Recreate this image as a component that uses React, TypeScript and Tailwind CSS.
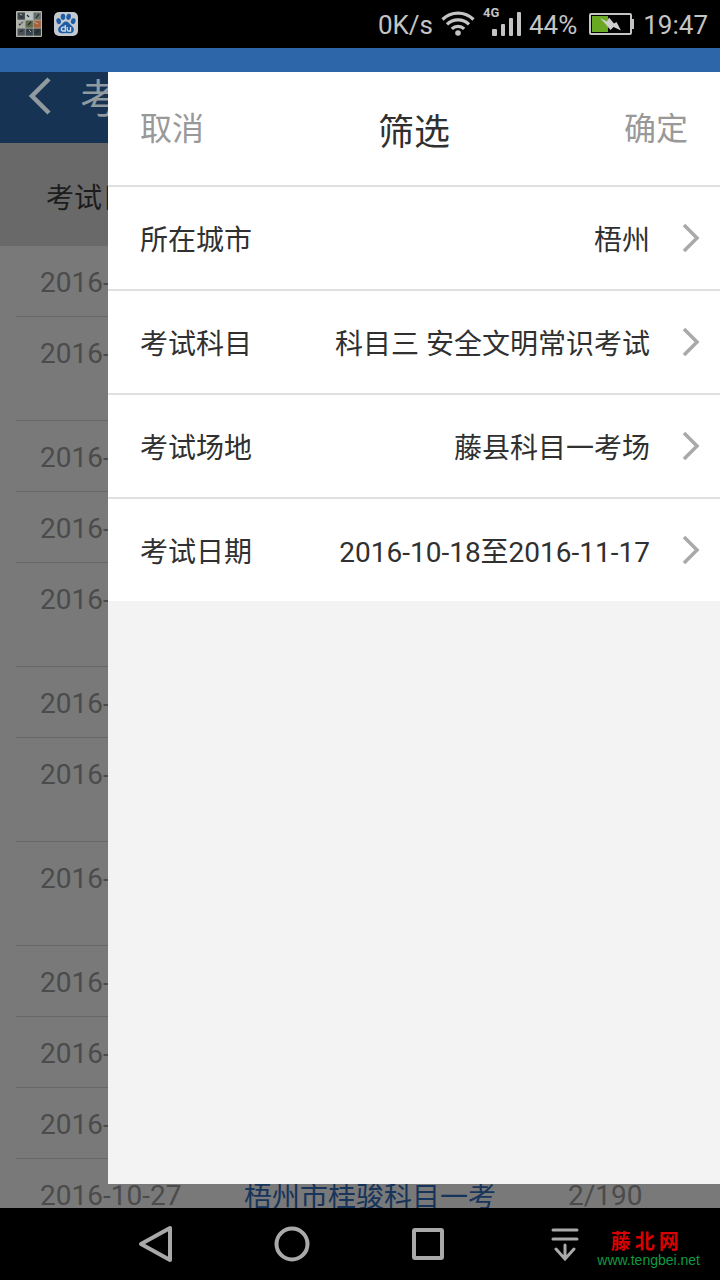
import { JSX } from "react";

type Filter = { label: string; value: string };
type Exam = { date: string; tall?: boolean; place?: string; count?: string };

const filters: Filter[] = [
  { label: "所在城市", value: "梧州" },
  { label: "考试科目", value: "科目三 安全文明常识考试" },
  { label: "考试场地", value: "藤县科目一考场" },
  { label: "考试日期", value: "2016-10-18至2016-11-17" },
];

const exams: Exam[] = [
  { date: "2016-" },
  { date: "2016-", tall: true },
  { date: "2016-" },
  { date: "2016-" },
  { date: "2016-", tall: true },
  { date: "2016-" },
  { date: "2016-", tall: true },
  { date: "2016-", tall: true },
  { date: "2016-" },
  { date: "2016-" },
  { date: "2016-" },
  { date: "2016-10-27", place: "梧州市桂骏科目一考", count: "2/190" },
];

const tiles = [
  "#3d464b", "#b9c3c4", "#65706d",
  "#a8afa8", "#5f6a4b", "#a5623c",
  "#4a5358", "#38434f", "#2f3a3a",
];

function GalleryIcon() {
  return (
    <svg width="26" height="26" viewBox="0 0 26 26" aria-hidden="true">
      <rect width="26" height="26" rx="1" fill="#b5b5ae" />
      {tiles.map((c, i) => (
        <rect key={i} x={1.5 + (i % 3) * 8} y={1.5 + Math.floor(i / 3) * 8} width="7.4" height="7.2" fill={c} />
      ))}
      <path d="M4 6h3M11 4l2 2M20 7l3-4M3 14l4-3M12 14l3-3M4 21l3-2M11 20h5M20 22l3-3" stroke="#20272a" strokeWidth="1.2" fill="none" />
      <path d="M4 3l2 1M4 12h3M18 11l4 2M13 19l2 2" stroke="#a8b0ae" fill="none" />
    </svg>
  );
}

function PawIcon() {
  return (
    <svg width="24" height="24" viewBox="0 0 24 24" aria-hidden="true">
      <rect width="24" height="24" rx="5" fill="#c3c9cf" />
      <g fill="#1f5ca6">
        <ellipse cx="4.7" cy="9.2" rx="2.3" ry="3" transform="rotate(-15 4.7 9.2)" />
        <ellipse cx="9" cy="4.8" rx="2.3" ry="3.1" />
        <ellipse cx="14.6" cy="4.8" rx="2.3" ry="3.1" transform="rotate(8 14.6 4.8)" />
        <ellipse cx="19.2" cy="9.2" rx="2.3" ry="3" transform="rotate(15 19.2 9.2)" />
        <path d="M12 9.5c2.5 0 3.3 2 4.6 3.3 1.6 1.5 3.3 2.7 3.3 4.7 0 2.7-2 3.8-4 3.8-1.4 0-2.5-.3-3.9-.3s-2.5.3-3.9.3c-2 0-4-1.100-4-3.8 0-2 1.7-3.2 3.3-4.7C8.7 11.5 9.5 9.5 12 9.5z" />
      </g>
      <path d="M11.3 13v6H9.3a1.6 1.6 0 0 1 0-3.9h2M13.2 15v2.7c0 .8.5 1.3 1.3 1.3h2v-4" stroke="#d5dbe0" strokeWidth="1.3" fill="none" />
    </svg>
  );
}

function WifiIcon() {
  return (
    <svg width="34" height="26" viewBox="0 0 34 26" fill="none" stroke="#c4c4c4" strokeWidth="3.2" aria-hidden="true">
      <path d="M1.5 8.5C10 0 24 0 32.5 8.5" />
      <path d="M6 13.3c6-6 16-6 22 0" />
      <path d="M10.8 17.8c3.4-3.2 9-3.2 12.4 0" />
      <circle cx="17" cy="22" r="2.8" fill="#c4c4c4" stroke="none" />
    </svg>
  );
}

function SignalIcon() {
  return (
    <svg width="30" height="26" viewBox="0 0 30 26" fill="#c4c4c4" aria-hidden="true">
      <rect x="1" y="18" width="5" height="7" rx="1" />
      <rect x="10" y="13" width="4" height="12" rx="1" />
      <rect x="18" y="7" width="4" height="18" rx="1" />
      <rect x="26" y="1" width="4" height="24" rx="1" />
    </svg>
  );
}

function BatteryIcon() {
  return (
    <svg width="46" height="22" viewBox="0 0 46 22" aria-hidden="true">
      <rect x="1" y="1" width="41" height="20" rx="1" fill="none" stroke="#c4c4c4" strokeWidth="2" />
      <rect x="43" y="6" width="2" height="10" fill="#c4c4c4" />
      <rect x="3" y="3" width="16" height="16" fill="#68a822" />
      <path d="M11 5L18 8.500 20 4.500 25 10.500 27.500 9 32 17.500 24.500 14 21.500 17 16.500 11z" fill="#cfcfcf" />
    </svg>
  );
}

function StatusBar() {
  return (
    <div className="h-12 shrink-0 bg-black text-[#c4c4c4] flex items-center justify-between pl-4 pr-3 text-[26px] leading-8">
      <div className="flex items-center gap-3">
        <GalleryIcon />
        <PawIcon />
      </div>
      <div className="flex items-center">
        <span className="mr-2 pt-0.5">0K/s</span>
        <WifiIcon />
        <div className="relative ml-4 mr-2">
          <span className="absolute -left-2 -top-1.5 text-[13px] leading-4 font-bold">4G</span>
          <SignalIcon />
        </div>
        <span className="mr-3 pt-0.5">44%</span>
        <BatteryIcon />
        <span className="ml-2 pt-0.5">19:47</span>
      </div>
    </div>
  );
}

function ExamList() {
  return (
    <div className="bg-[#797979]">
      <header className="h-[71px] bg-[#173354] text-[#919a9f] flex pl-7">
        <button aria-label="返回" className="w-[52px] h-12 flex items-center">
          <svg width="24" height="40" viewBox="0 0 24 40" fill="none" stroke="currentColor" strokeWidth="4.5">
            <path d="M21 3L4 20l17 17" />
          </svg>
        </button>
        <h2 className="text-[40px] leading-[56px]">考</h2>
      </header>
      <div className="h-[103px] bg-[#696969] text-[#1c1c1c] flex items-center pl-[46px] pt-2 text-[28px] leading-8">考试日</div>
      <ul className="pl-4 text-[28px] leading-[34px] text-[#4b4b4b]">
        {exams.map((exam, i) => (
          <li
            key={i}
            className={`flex items-start pt-5 pl-6 border-b border-[#666666] ${exam.tall ? "h-[104px]" : "h-[71px]"}`}
          >
            <span className="w-51">{exam.date}</span>
            {exam.place && <a href="#" className="w-81 pt-0.5 text-[#17345a]">{exam.place}</a>}
            {exam.count && <span>{exam.count}</span>}
          </li>
        ))}
      </ul>
    </div>
  );
}

function FilterDrawer() {
  return (
    <section className="absolute left-[15%] right-0 top-0 bottom-6 bg-[#f3f3f3] text-[#303030]">
      <header className="h-[115px] bg-white border-b-2 border-[#e0e0e0] flex items-center justify-between px-8">
        <button className="text-[32px] leading-10 text-[#999999]">取消</button>
        <h1 className="text-[36px] leading-10 pt-2">筛选</h1>
        <button className="text-[32px] leading-10 text-[#999999]">确定</button>
      </header>
      <div className="bg-white divide-y-2 divide-[#e0e0e0]">
        {filters.map((f) => (
          <button key={f.label} className="w-full h-[104px] last:h-[102px] flex items-center pl-8 pr-5 text-[28px] leading-8">
            <span className="pt-1.5">{f.label}</span>
            <span className="pt-1.5 ml-auto mr-8">{f.value}</span>
            <svg width="18" height="30" viewBox="0 0 18 30" fill="none" stroke="#a9a9a9" strokeWidth="3.5" aria-hidden="true">
              <path d="M2 2l13 13L2 28" />
            </svg>
          </button>
        ))}
      </div>
    </section>
  );
}

function NavBar() {
  return (
    <nav className="relative h-[72px] shrink-0 bg-black px-[12%] flex text-[#a9a9a9]">
      <button aria-label="后退" className="flex-1 flex items-center justify-center">
        <svg width="36" height="40" viewBox="0 0 36 40" fill="none" stroke="currentColor" strokeWidth="4" strokeLinejoin="round">
          <path d="M4 20L33 4v32z" />
        </svg>
      </button>
      <button aria-label="主页" className="flex-1 flex items-center justify-center">
        <svg width="36" height="36" viewBox="0 0 36 36" fill="none" stroke="currentColor" strokeWidth="4">
          <circle cx="18" cy="18" r="15.5" />
        </svg>
      </button>
      <button aria-label="最近任务" className="flex-1 flex items-center justify-center">
        <svg width="32" height="32" viewBox="0 0 32 32" fill="none" stroke="currentColor" strokeWidth="4" strokeLinejoin="round">
          <rect x="2" y="2" width="28" height="28" rx="1" />
        </svg>
      </button>
      <button aria-label="通知" className="flex-1 flex items-center justify-center">
        <svg width="28" height="34" viewBox="0 0 28 34" fill="none" stroke="currentColor" strokeWidth="3" strokeLinecap="round">
          <path d="M2 3h24M2 12h24M14 18v13M5 22l9 10 9-10" />
        </svg>
      </button>
      <div className="absolute right-5 bottom-3 flex flex-col items-center">
        <span className="flex gap-1 pr-2 text-[20px] leading-5 font-bold text-[#d80000]">
          <span>藤</span>
          <span>北</span>
          <span>网</span>
        </span>
        <a href="#" className="text-[14px] leading-4 text-[#109a40] font-['Liberation_Sans',sans-serif]">www.tengbei.net</a>
      </div>
    </nav>
  );
}

export default function App(): JSX.Element {
  return (
    <div lang="zh-CN" className="h-screen w-full flex flex-col font-[Roboto,'Noto_Sans_CJK_SC',sans-serif]">
      <StatusBar />
      <div className="h-6 shrink-0 bg-[#2d66a9]" />
      <main className="relative flex-1 min-h-0 overflow-hidden">
        <ExamList />
        <FilterDrawer />
      </main>
      <NavBar />
    </div>
  );
}
